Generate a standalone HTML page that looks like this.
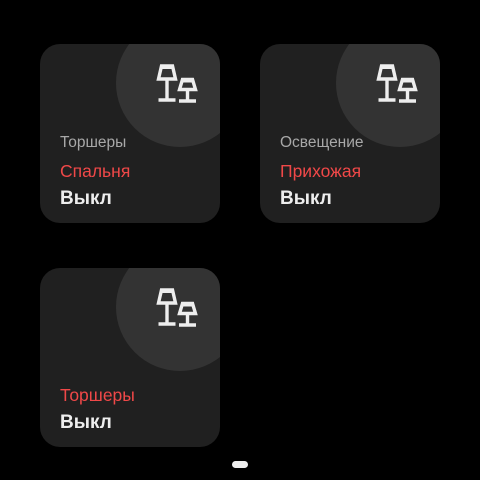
<!DOCTYPE html>
<html><head><meta charset="utf-8"><style>
body{margin:0;width:480px;height:480px;background:#000;position:relative;overflow:hidden;font-family:"Liberation Sans",sans-serif}
.c{position:absolute;width:180px;height:179px;background:#202020;border-radius:20px;overflow:hidden}
.circ{position:absolute;left:76px;top:-25px;width:128px;height:128px;border-radius:50%;background:#333}
.ic{position:absolute;left:114px;top:20px}
.t{position:absolute;left:20px;white-space:nowrap}
.g{color:#a8a8a8;font-size:15.5px;top:90px}
.r{color:#f04848;font-size:17.5px;top:117px}
.b{color:#eee;font-size:19px;font-weight:bold;top:144px}
.dot{position:absolute;left:232px;top:461px;width:16px;height:7px;border-radius:4px;background:#eee}
</style></head><body>
<div class="c" style="left:40px;top:44px"><div class="circ"></div>
<svg class="ic" width="50" height="50" viewBox="0 0 50 50" fill="none" stroke="#eee" stroke-width="3.4">
<path d="M7.5 2h11l3 13h-17z"/><rect x="6" y="0.5" width="14" height="4.5" fill="#eee" stroke="none"/><path d="M13 15v20M4.5 36h17"/>
<path d="M28.5 15.5h10l3 10h-16z"/><rect x="27" y="14" width="13" height="4.5" fill="#eee" stroke="none"/><path d="M33.5 25.5v11M25 37h17"/></svg>
<div class="t g">Торшеры</div><div class="t r">Спальня</div><div class="t b">Выкл</div></div>
<div class="c" style="left:260px;top:44px"><div class="circ"></div>
<svg class="ic" width="50" height="50" viewBox="0 0 50 50" fill="none" stroke="#eee" stroke-width="3.4">
<path d="M7.5 2h11l3 13h-17z"/><rect x="6" y="0.5" width="14" height="4.5" fill="#eee" stroke="none"/><path d="M13 15v20M4.5 36h17"/>
<path d="M28.5 15.5h10l3 10h-16z"/><rect x="27" y="14" width="13" height="4.5" fill="#eee" stroke="none"/><path d="M33.5 25.5v11M25 37h17"/></svg>
<div class="t g">Освещение</div><div class="t r">Прихожая</div><div class="t b">Выкл</div></div>
<div class="c" style="left:40px;top:268px"><div class="circ"></div>
<svg class="ic" width="50" height="50" viewBox="0 0 50 50" fill="none" stroke="#eee" stroke-width="3.4">
<path d="M7.5 2h11l3 13h-17z"/><rect x="6" y="0.5" width="14" height="4.5" fill="#eee" stroke="none"/><path d="M13 15v20M4.5 36h17"/>
<path d="M28.5 15.5h10l3 10h-16z"/><rect x="27" y="14" width="13" height="4.5" fill="#eee" stroke="none"/><path d="M33.5 25.5v11M25 37h17"/></svg>
<div class="t r">Торшеры</div><div class="t b">Выкл</div></div>
<div class="dot"></div>
</body></html>
